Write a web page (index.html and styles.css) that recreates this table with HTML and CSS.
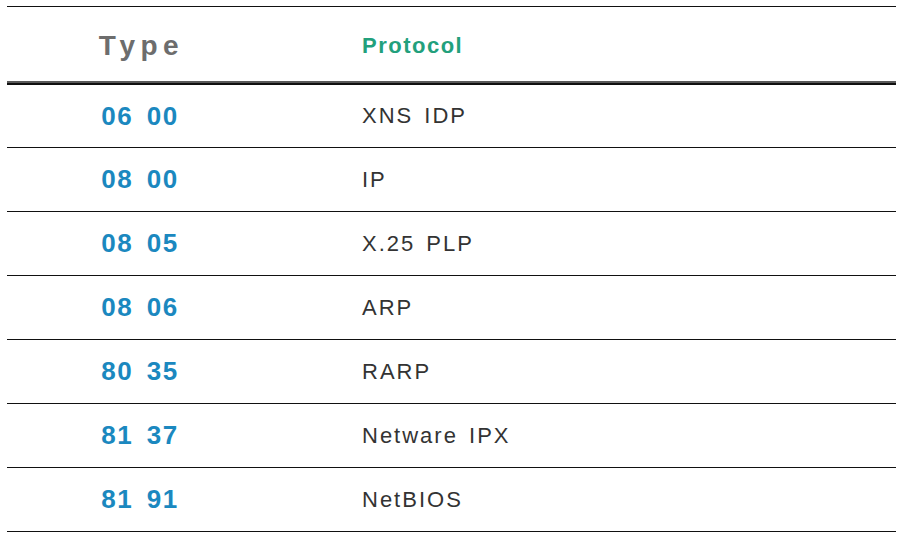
FILE: index.html
```html
<!DOCTYPE html>
<html>
<head>
<meta charset="utf-8">
<link rel="stylesheet" href="styles.css">
</head>
<body>
<div class="table">
  <div class="row head">
    <div class="c-type">Type</div>
    <div class="c-proto">Protocol</div>
  </div>
  <div class="row first">
    <div class="c-type">06 00</div>
    <div class="c-proto">XNS IDP</div>
  </div>
  <div class="row">
    <div class="c-type">08 00</div>
    <div class="c-proto">IP</div>
  </div>
  <div class="row">
    <div class="c-type">08 05</div>
    <div class="c-proto">X.25 PLP</div>
  </div>
  <div class="row">
    <div class="c-type">08 06</div>
    <div class="c-proto">ARP</div>
  </div>
  <div class="row">
    <div class="c-type">80 35</div>
    <div class="c-proto">RARP</div>
  </div>
  <div class="row">
    <div class="c-type">81 37</div>
    <div class="c-proto">Netware IPX</div>
  </div>
  <div class="row">
    <div class="c-type">81 91</div>
    <div class="c-proto">NetBIOS</div>
  </div>
</div>
</body>
</html>
```

FILE: styles.css
```css
html, body {
  margin: 0;
  padding: 0;
  background: #ffffff;
}
body {
  padding: 6px 1px 0 7px;
  font-family: "Liberation Sans", Arial, sans-serif;
}
.table {
  border-top: 1px solid #111;
}
.row {
  display: grid;
  grid-template-columns: 264px 1fr;
  align-items: center;
  height: 63px;
  border-bottom: 1px solid #111;
}
.row.head {
  height: 74px;
  border-bottom: 2px solid #5a5a5a;
  box-shadow: 0 2px 0 #111;
  margin-bottom: 2px;
}
.row.first {
  height: 62px;
}
.c-type {
  text-align: center;
  font-size: 26px;
  font-weight: bold;
  color: #1b88bf;
  letter-spacing: 1.5px;
  word-spacing: 5px;
  padding-left: 2px;
}
.c-proto {
  padding-left: 91px;
  font-size: 22px;
  color: #333;
  letter-spacing: 2px;
  word-spacing: 3px;
}
.head .c-type {
  color: #6d6d6d;
  font-size: 28px;
  letter-spacing: 5.5px;
  word-spacing: 0;
  padding-top: 3px;
  padding-left: 5px;
}
.head .c-proto {
  color: #22a07c;
  font-weight: bold;
  font-size: 22px;
  letter-spacing: 1.5px;
  word-spacing: 0;
  padding-top: 3px;
}
```
